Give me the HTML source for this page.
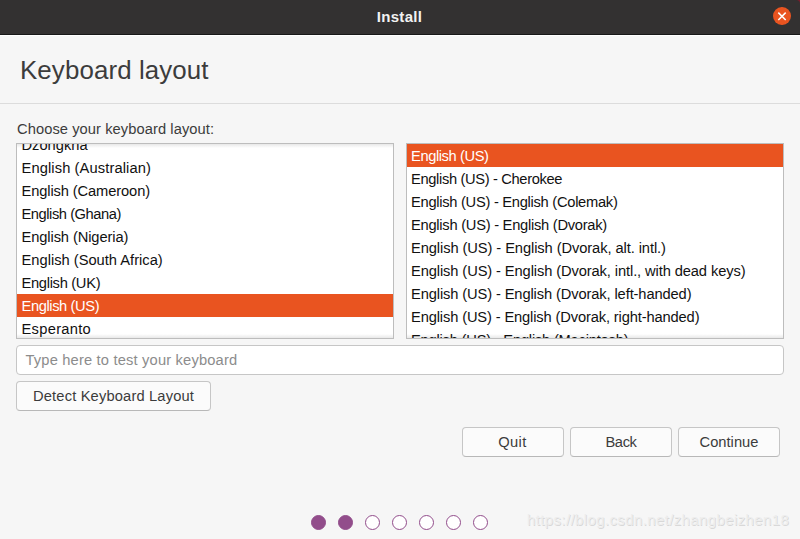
<!DOCTYPE html>
<html><head><meta charset="utf-8">
<style>
*{margin:0;padding:0;box-sizing:border-box}
html,body{width:800px;height:539px;overflow:hidden;background:#f6f6f6;font-family:"Liberation Sans",sans-serif;color:#3c3c3c}
.a{position:absolute;white-space:nowrap}
#tb{position:absolute;left:0;top:0;width:800px;height:34px;background:#333131}
#tbl{position:absolute;left:0;top:34px;width:800px;height:1px;background:#181818}
#tbw{position:absolute;left:0;top:35px;width:800px;height:1px;background:#ffffff}
#title{left:-0.5px;width:800px;text-align:center;top:7px;letter-spacing:0.3px;line-height:20px;font-size:15px;font-weight:bold;color:#f2f2f2}
#close{position:absolute;left:773px;top:6.5px;width:18px;height:18.5px;border-radius:50%;background:#e95420}
h1{position:absolute;font-weight:normal;left:20px;top:55px;font-size:25.9px;line-height:30px;letter-spacing:0.1px;color:#3c3c3c;white-space:nowrap}
#sep{position:absolute;left:0;top:103px;width:800px;height:1px;background:#dcdcdc}
.lbl{left:17px;font-size:14.7px;line-height:20px;top:119px;letter-spacing:0.07px}
.list{position:absolute;top:143px;height:196px;background:#fff;border:1px solid #bdbdbd;overflow:hidden}
.list div{position:absolute;left:0;right:0;height:23px;line-height:23px;padding-top:1px;font-size:14.7px;color:#111;white-space:nowrap}
.list div.sel{background:#e95420;color:#fff}
#l1{left:16px;width:378px}
#l1 div{padding-left:4.5px}
#l2{left:406px;width:378px}
#l2 div{padding-left:4px}
#entry{position:absolute;left:16px;top:345px;width:768px;height:30px;border:1px solid #c6c6c6;border-radius:4px;background:#fff}
#ph{left:25.5px;top:349.5px;letter-spacing:0.17px;line-height:20px;font-size:14.7px;color:#8c8c8c}
.btn{position:absolute;height:30px;border:1px solid #c6c6c6;border-bottom-color:#b8b8b8;border-radius:4px;background:#fbfbfb;font-size:14.7px;line-height:28px;text-align:center;color:#3c3c3c;white-space:nowrap}
.dot{position:absolute;top:515px;width:15px;height:15px;border-radius:50%;border:1.2px solid #924d8b;background:#fff}
.dot.f{background:#924d8b}
#wm{left:527px;top:511px;font-size:15px;line-height:18px;letter-spacing:0.38px;color:#ededed;text-shadow:0.7px 0.7px 0.5px #d8d8d8}
.shb{position:absolute;left:0;right:0;bottom:0;height:4px;background:linear-gradient(rgba(0,0,0,0),rgba(0,0,0,0.09))}
.sht{position:absolute;left:0;right:0;top:0;height:4px;background:linear-gradient(rgba(0,0,0,0.09),rgba(0,0,0,0))}
</style></head><body>
<div id="tb"></div><svg style="position:absolute;left:796px;top:0" width="4" height="4"><path d="M0 0H4V4A4 4 0 0 0 0 0Z" fill="#7a1c2c"/></svg><div id="tbl"></div><div id="tbw"></div>
<div class="a" id="title">Install</div>
<div id="close"><svg width="18" height="18" viewBox="0 0 18 18" style="position:absolute;left:0;top:0"><path d="M5.3 5.6L12.7 13M12.7 5.6L5.3 13" stroke="#fff" stroke-width="1.5"/></svg></div>
<h1>Keyboard layout</h1>
<div id="sep"></div>
<div class="a lbl">Choose your keyboard layout:</div>
<div class="list" id="l1">
<div style="top:-11px;letter-spacing:0px">Dzongkha</div>
<div style="top:12px;letter-spacing:0.105px">English (Australian)</div>
<div style="top:35px;letter-spacing:-0.118px">English (Cameroon)</div>
<div style="top:58px;letter-spacing:-0.45px">English (Ghana)</div>
<div style="top:81px;letter-spacing:-0.106px">English (Nigeria)</div>
<div style="top:104px;letter-spacing:0px">English (South Africa)</div>
<div style="top:127px;letter-spacing:-0.31px">English (UK)</div>
<div class="sel" style="top:150px;letter-spacing:-0.4px">English (US)</div>
<div style="top:173px;letter-spacing:0.29px">Esperanto</div>
<i class="sht"></i><i class="shb"></i>
</div>
<div class="list" id="l2">
<div class="sel" style="top:0px;letter-spacing:-0.41px">English (US)</div>
<div style="top:23px;letter-spacing:-0.35px">English (US) - Cherokee</div>
<div style="top:46px;letter-spacing:-0.28px">English (US) - English (Colemak)</div>
<div style="top:69px;letter-spacing:-0.26px">English (US) - English (Dvorak)</div>
<div style="top:92px;letter-spacing:-0.09px">English (US) - English (Dvorak, alt. intl.)</div>
<div style="top:115px;letter-spacing:-0.11px">English (US) - English (Dvorak, intl., with dead keys)</div>
<div style="top:138px;letter-spacing:-0.12px">English (US) - English (Dvorak, left-handed)</div>
<div style="top:161px;letter-spacing:-0.14px">English (US) - English (Dvorak, right-handed)</div>
<div style="top:184px;letter-spacing:-0.21px">English (US) - English (Macintosh)</div>
<i class="shb"></i>
</div>
<div id="entry"></div>
<div class="a" id="ph">Type here to test your keyboard</div>
<div class="btn" style="left:16px;top:381px;width:195px;text-align:left;padding-left:16px;letter-spacing:0.16px">Detect Keyboard Layout</div>
<div class="btn" style="left:462px;top:427px;width:102px;letter-spacing:0.4px;text-indent:-1px">Quit</div>
<div class="btn" style="left:570px;top:427px;width:102px;letter-spacing:-0.4px">Back</div>
<div class="btn" style="left:678px;top:427px;width:102px">Continue</div>
<div class="dot f" style="left:311px"></div>
<div class="dot f" style="left:338px"></div>
<div class="dot" style="left:365px"></div>
<div class="dot" style="left:392px"></div>
<div class="dot" style="left:419px"></div>
<div class="dot" style="left:446px"></div>
<div class="dot" style="left:473px"></div>
<div class="a" id="wm">https://blog.csdn.net/zhangbeizhen18</div>
</body></html>
